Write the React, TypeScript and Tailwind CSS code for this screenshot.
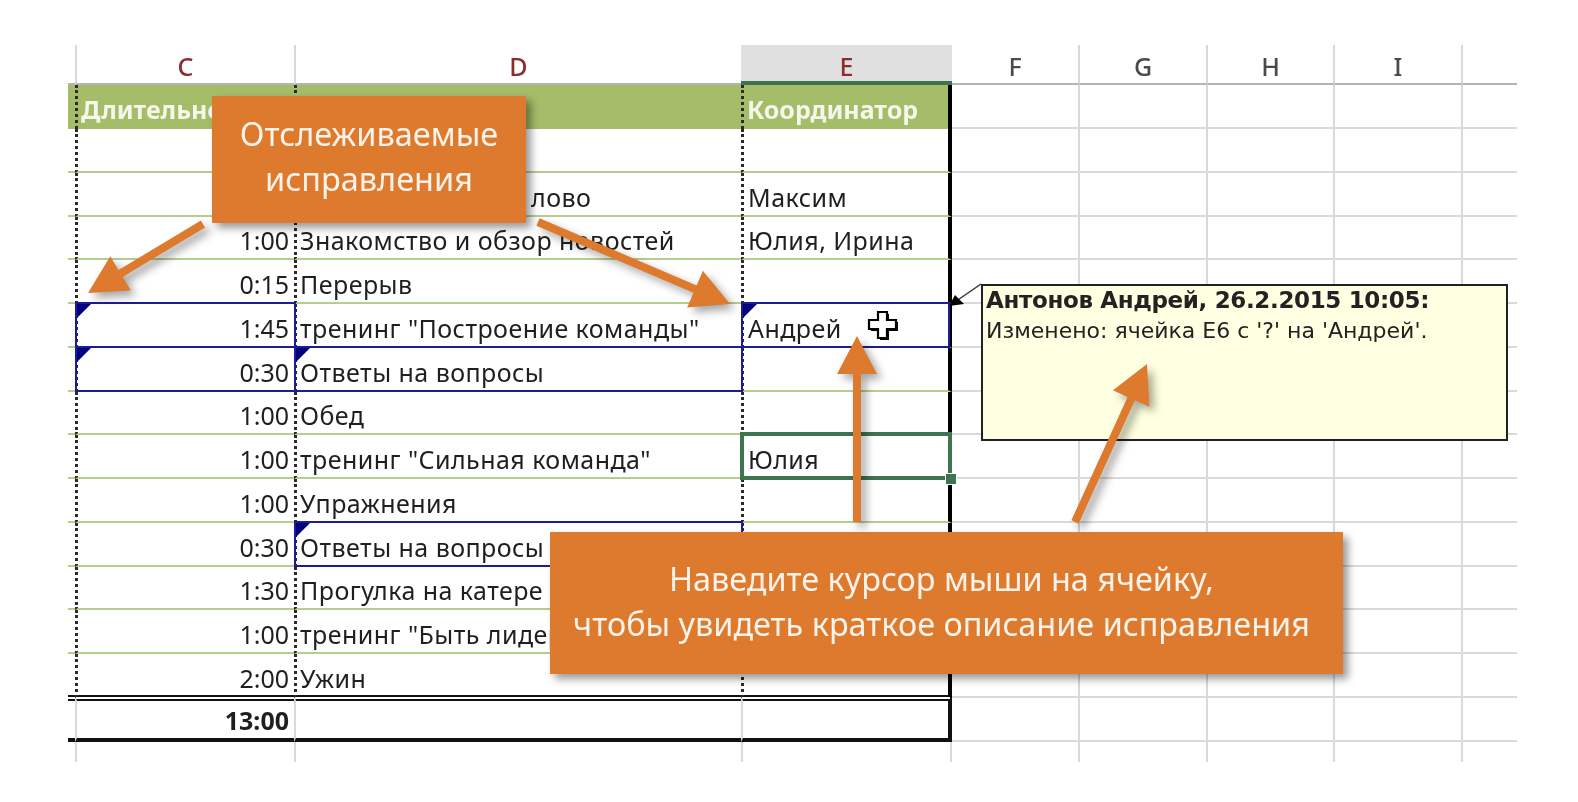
import React from "react";

const GREEN = "border-b-[#b7cd8e]";

type Row = { c?: string; d?: string; e?: string; blueC?: boolean; blueD?: boolean; blueE?: boolean; sel?: boolean; last?: boolean };

const rows: Row[] = [
  {},
  { e: "Максим" },
  { c: "1:00", d: "Знакомство и обзор новостей", e: "Юлия, Ирина" },
  { c: "0:15", d: "Перерыв" },
  { c: "1:45", d: 'тренинг "Построение команды"', e: "Андрей", blueC: true, blueE: true },
  { c: "0:30", d: "Ответы на вопросы", blueC: true, blueD: true },
  { c: "1:00", d: "Обед" },
  { c: "1:00", d: 'тренинг "Сильная команда"', e: "Юлия", sel: true },
  { c: "1:00", d: "Упражнения" },
  { c: "0:30", d: "Ответы на вопросы", blueD: true },
  { c: "1:30", d: "Прогулка на катере" },
  { c: "1:00", d: 'тренинг "Быть лидером"' },
  { c: "2:00", d: "Ужин", last: true },
];

const Tracked = () => (
  <>
    <span className="absolute -left-[3px] -right-[2px] -top-[2px] -bottom-[2px] z-10 border-2 border-[#1c1c94]" />
    <span className="absolute -left-px top-0 z-10 h-0 w-0 border-r-[14px] border-t-[14px] border-r-transparent border-t-[#000080]" />
  </>
);

const EmptyCols = () => (
  <>
    <div className="border-b-2 border-r-2 border-[#d9d9d9]" />
    <div className="border-b-2 border-r-2 border-[#d9d9d9]" />
    <div className="border-b-2 border-r-2 border-[#d9d9d9]" />
    <div className="border-b-2 border-r-2 border-[#d9d9d9]" />
    <div className="border-b-2 border-[#d9d9d9]" />
  </>
);

const cols = "grid grid-cols-[7px_219px_447px_211px_128px_128px_127px_128px_54px] grid-rows-[100%]";

function Arrow({ x1, y1, x2, y2 }: { x1: number; y1: number; x2: number; y2: number }) {
  const dx = x2 - x1;
  const dy = y2 - y1;
  const len = Math.hypot(dx, dy);
  const ux = dx / len;
  const uy = dy / len;
  const bx = x2 - ux * 38;
  const by = y2 - uy * 38;
  const px = -uy;
  const py = ux;
  const w = 20;
  const s = 4;
  const pts = [
    [x1 + px * s, y1 + py * s],
    [bx + px * s, by + py * s],
    [bx + px * w, by + py * w],
    [x2, y2],
    [bx - px * w, by - py * w],
    [bx - px * s, by - py * s],
    [x1 - px * s, y1 - py * s],
  ]
    .map((p) => p.join(","))
    .join(" ");
  return <polygon points={pts} fill="#dd7a2e" />;
}

export default function App() {
  return (
    <div className="relative h-[802px] w-[1578px] overflow-hidden bg-white pl-[68px] pt-[45px] font-['Noto_Sans',sans-serif] text-[#1f1f1f] blur-[0.6px]">
      <div className="w-[1449px]">
        {/* column header */}
        <div className={`${cols} h-[40px] text-[25px] font-medium leading-[38px] text-[#4a4a4a]`}>
          <div className="border-b-2 border-[#b4b4b4]" />
          <div className="border-b-2 border-l-2 border-b-[#b4b4b4] border-l-[#d9d9d9] pt-[2px] text-center text-[#8c2c2c]">C</div>
          <div className="border-b-2 border-l-2 border-b-[#b4b4b4] border-l-[#d9d9d9] pt-[2px] text-center text-[#8c2c2c]">D</div>
          <div className="border-b-4 border-b-[#3f7450] bg-[#e0e0e0] pt-[2px] text-center text-[#8c2c2c]">E</div>
          <div className="border-b-2 border-r-2 border-b-[#b4b4b4] border-r-[#d9d9d9] pt-[2px] text-center">F</div>
          <div className="border-b-2 border-r-2 border-b-[#b4b4b4] border-r-[#d9d9d9] pt-[2px] text-center">G</div>
          <div className="border-b-2 border-r-2 border-b-[#b4b4b4] border-r-[#d9d9d9] pt-[2px] text-center">H</div>
          <div className="border-b-2 border-r-2 border-b-[#b4b4b4] border-r-[#d9d9d9] pt-[2px] text-center">I</div>
          <div className="border-b-2 border-[#b4b4b4]" />
        </div>

        {/* title row */}
        <div className={`${cols} h-[44px] text-[25px] font-bold leading-[40px] text-[#f4f7ea]`}>
          <div className="bg-[#a5bc69]" />
          <div className="overflow-hidden whitespace-nowrap border-l-[3px] border-dotted border-[#2a2a2a] bg-[#a5bc69] pl-[3px] pt-[4px]">Длительно</div>
          <div className="border-l-[3px] border-dotted border-[#2a2a2a] bg-[#a5bc69]" />
          <div className="border-l-[3px] border-r-4 border-dotted border-l-[#2a2a2a] border-r-black bg-[#a5bc69] pl-[3px] pt-[4px] [border-right-style:solid]">Координатор</div>
          <EmptyCols />
        </div>

        {rows.map((r, i) => {
          const line = r.last ? "border-b-transparent" : GREEN;
          return (
            <div key={i} className={`${cols} h-[43.75px] text-[25px] leading-[30px] tracking-[0.45px]`}>
              <div className={`border-b-2 ${line}`} />
              <div className={`relative flex items-end justify-end border-b-2 border-l-[3px] ${line} border-l-[#2a2a2a] [border-left-style:dotted] pb-[3px] pr-[5px] tracking-normal`}>
                {r.blueC && <Tracked />}
                {r.c}
              </div>
              <div className={`relative flex items-end whitespace-nowrap border-b-2 border-l-[3px] ${line} border-l-[#2a2a2a] [border-left-style:dotted] pb-[3px] pl-[3px]`}>
                {r.blueD && <Tracked />}
                {r.d}
                {i === 1 && <span className="pl-[231px]">лово</span>}
              </div>
              <div className={`relative flex items-end whitespace-nowrap border-b-2 border-l-[3px] border-r-4 ${line} border-l-[#2a2a2a] border-r-black [border-left-style:dotted] pb-[3px] pl-[4px]`}>
                {r.blueE && <Tracked />}
                {r.sel && (
                  <>
                    <span className="absolute -left-[4px] -right-[4px] -top-[3px] -bottom-[3px] z-10 border-4 border-[#3f7450]" />
                    <span className="absolute -bottom-[7px] -right-[8px] z-10 h-[10px] w-[10px] bg-[#3f7450] outline outline-1 outline-white" />
                  </>
                )}
                {r.e}
              </div>
              <EmptyCols />
            </div>
          );
        })}

        {/* totals row */}
        <div className={`${cols} -mt-[3px] h-[47px] text-[25px] font-bold leading-[30px]`}>
          <div className="border-b-4 border-t-[6px] border-[#111111] [border-top-style:double]" />
          <div className="flex items-end justify-end border-b-4 border-l-2 border-t-[6px] border-y-[#111111] border-l-[#d9d9d9] pb-[3px] pr-[5px] [border-top-style:double]">13:00</div>
          <div className="border-b-4 border-l-2 border-t-[6px] border-y-[#111111] border-l-[#d9d9d9] [border-top-style:double]" />
          <div className="border-b-4 border-l-2 border-r-4 border-t-[6px] border-y-[#111111] border-l-[#d9d9d9] border-r-[#111111] [border-top-style:double]" />
          <EmptyCols />
        </div>

        {/* stub row */}
        <div className={`${cols} h-[20px]`}>
          <div />
          <div className="border-l-2 border-[#d9d9d9]" />
          <div className="border-l-2 border-[#d9d9d9]" />
          <div className="border-x-2 border-[#d9d9d9]" />
          <div className="border-r-2 border-[#d9d9d9]" />
          <div className="border-r-2 border-[#d9d9d9]" />
          <div className="border-r-2 border-[#d9d9d9]" />
          <div className="border-r-2 border-[#d9d9d9]" />
          <div />
        </div>
      </div>

      {/* comment */}
      <div className="absolute left-[981px] top-[284px] z-20 h-[157px] w-[527px] border-2 border-[#222222] bg-[#ffffe1] px-[3px] font-['DejaVu_Sans',sans-serif] text-[#222222]">
        <div className="whitespace-nowrap text-[23px] font-bold leading-[28px] tracking-[-0.35px]">Антонов Андрей, 26.2.2015 10:05:</div>
        <div className="whitespace-nowrap pt-[3px] text-[22px] leading-[28px]">Изменено: ячейка E6 с '?' на 'Андрей'.</div>
      </div>

      {/* connector */}
      <svg className="absolute left-[940px] top-[275px] z-20" width="50" height="45" viewBox="0 0 50 45">
        <line x1="41" y1="9" x2="12" y2="29" stroke="#333333" strokeWidth="1.5" />
        <polygon points="9,31 24,29 15,20" fill="#000000" />
      </svg>

      {/* cursor */}
      <svg className="absolute left-[866px] top-[309px] z-20" width="34" height="34" viewBox="0 0 34 34">
        <path d="M12 3h9v8h9v9h-9v9h-9v-9H3v-9h9z" fill="#000000" transform="translate(2 2)" />
        <path d="M12 3h9v8h9v9h-9v9h-9v-9H3v-9h9z" fill="#ffffff" stroke="#000000" strokeWidth="2.2" />
      </svg>

      {/* arrows */}
      <svg className="absolute left-0 top-0 z-30 drop-shadow-[5px_5px_4px_rgba(0,0,0,0.35)]" width="1578" height="802" viewBox="0 0 1578 802">
        <Arrow x1={203} y1={224} x2={88} y2={293} />
        <Arrow x1={538} y1={222} x2={730} y2={304} />
        <Arrow x1={857} y1={522} x2={857} y2={336} />
        <Arrow x1={1075} y1={522} x2={1147} y2={364} />
      </svg>

      {/* callouts */}
      <div className="absolute left-[212px] top-[96px] z-40 flex h-[127px] w-[314px] flex-col items-center justify-center bg-[#dd7a2e] pb-[8px] text-[32.5px] leading-[45px] text-[#fbf3ea] shadow-[5px_5px_8px_rgba(0,0,0,0.4)]">
        <div>Отслеживаемые</div>
        <div>исправления</div>
      </div>
      <div className="absolute left-[550px] top-[532px] z-40 flex h-[142px] w-[793px] flex-col items-center justify-center bg-[#dd7a2e] pb-[5px] pr-[10px] text-[32.4px] leading-[45px] text-[#fbf3ea] shadow-[5px_5px_8px_rgba(0,0,0,0.4)]">
        <div className="whitespace-nowrap">Наведите курсор мыши на ячейку,</div>
        <div className="whitespace-nowrap">чтобы увидеть краткое описание исправления</div>
      </div>
    </div>
  );
}
